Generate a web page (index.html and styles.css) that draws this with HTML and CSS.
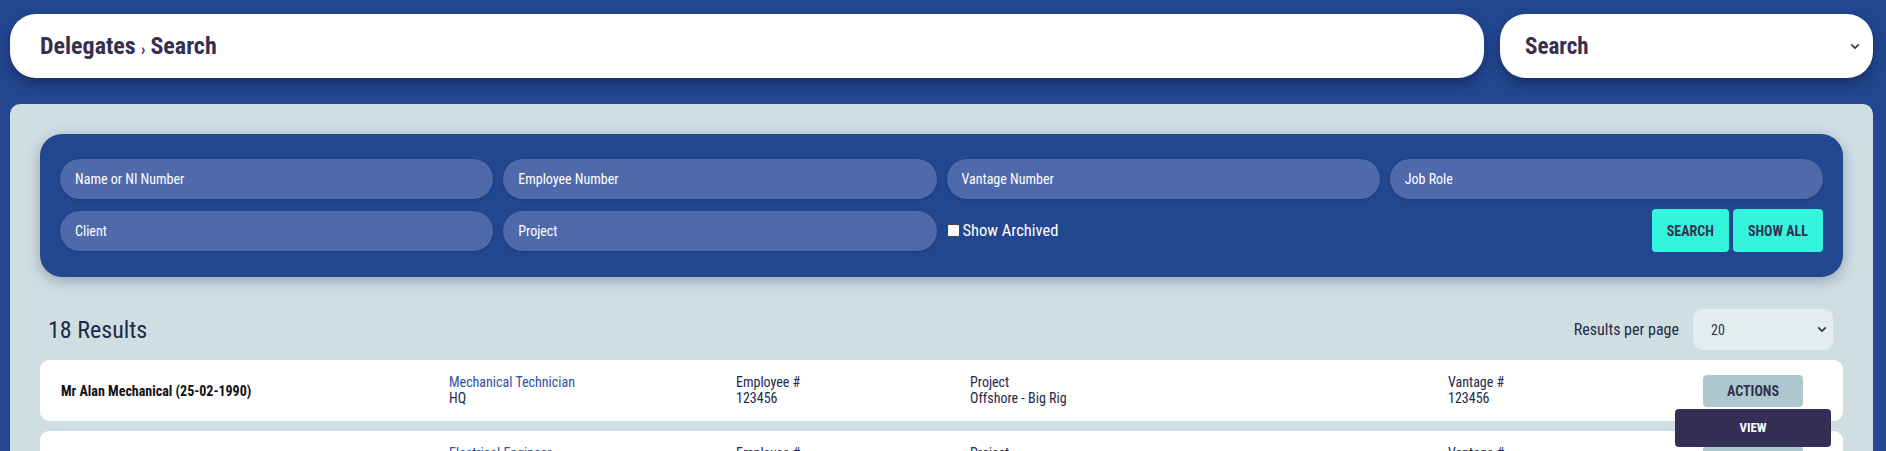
FILE: index.html
```html
<!DOCTYPE html>
<html lang="en">
<head>
<meta charset="utf-8">
<title>Delegates › Search</title>
<link rel="stylesheet" href="styles.css">
</head>
<body>
  <header class="topbar">
    <div class="crumb"><span class="crumb-main">Delegates</span><span class="crumb-sep">›</span><span class="crumb-main">Search</span></div>
    <div class="mode">
      <span class="mode-label">Search</span>
      <svg class="chev" viewBox="0 0 12 8" width="10" height="7"><path d="M1.5 1.5 L6 6 L10.5 1.5" fill="none" stroke="#35304f" stroke-width="2"/></svg>
    </div>
  </header>

  <main class="panel">
    <section class="filters">
      <div class="field">Name or NI Number</div>
      <div class="field">Employee Number</div>
      <div class="field">Vantage Number</div>
      <div class="field">Job Role</div>
      <div class="field">Client</div>
      <div class="field">Project</div>
      <label class="archived"><span class="box"></span>Show Archived</label>
      <div class="btns">
        <button class="btn">SEARCH</button>
        <button class="btn">SHOW ALL</button>
      </div>
    </section>

    <div class="results-bar">
      <h2 class="count">18 Results</h2>
      <div class="per-page">
        <span class="per-label">Results per page</span>
        <div class="per-select">
          <span>20</span>
          <svg class="chev" viewBox="0 0 12 8" width="10" height="7"><path d="M1.5 1.5 L6 6 L10.5 1.5" fill="none" stroke="#35304f" stroke-width="2"/></svg>
        </div>
      </div>
    </div>

    <div class="row">
      <div class="name">Mr Alan Mechanical (25-02-1990)</div>
      <div class="cell"><span class="role">Mechanical Technician</span><span>HQ</span></div>
      <div class="cell"><span>Employee #</span><span>123456</span></div>
      <div class="cell"><span>Project</span><span>Offshore - Big Rig</span></div>
      <div class="cell"><span>Vantage #</span><span>123456</span></div>
      <div class="act">
        <button class="actions">ACTIONS</button>
        <div class="menu"><span>VIEW</span></div>
      </div>
    </div>

    <div class="row">
      <div class="name">Mr Eric Electrical (14-07-1985)</div>
      <div class="cell"><span class="role">Electrical Engineer</span><span>HQ</span></div>
      <div class="cell"><span>Employee #</span><span>123457</span></div>
      <div class="cell"><span>Project</span><span>Offshore - Big Rig</span></div>
      <div class="cell"><span>Vantage #</span><span>123457</span></div>
      <div class="act">
        <button class="actions">ACTIONS</button>
      </div>
    </div>
  </main>
</body>
</html>
```
FILE: styles.css
```css
:root {
  --font: "Roboto Condensed", "Liberation Sans Narrow", "Arial Narrow", "Roboto", sans-serif;
  --navy: #35304f;
  --blue: #22468f;
}
* { box-sizing: border-box; }
html, body { margin: 0; }
body {
  background: var(--blue);
  font-family: var(--font);
  color: var(--navy);
  padding: 14px 13px 0 10px;
  height: 451px;
  overflow: hidden;
}

.topbar {
  display: flex;
  gap: 16px;
}
.crumb, .mode {
  height: 64px;
  background: #fff;
  border-radius: 26px;
  box-shadow: 0 6px 12px rgba(10, 25, 60, 0.45);
  display: flex;
  align-items: center;
}
.crumb {
  flex: 1;
  padding-left: 30px;
}
.crumb-main {
  font-size: 24px;
  font-weight: 700;
  color: var(--navy);
}
.crumb-sep {
  font-size: 17px;
  font-weight: 700;
  color: #2b3a8c;
  margin: 5px 5px 0 5px;
}
.mode {
  width: 373px;
  padding: 0 13px 0 25px;
  justify-content: space-between;
}
.mode-label {
  font-size: 23px;
  font-weight: 700;
}

.panel {
  margin-top: 26px;
  background: #cfdee3;
  border-radius: 10px;
  padding: 30px 30px;
  min-height: 400px;
}

.filters {
  background: var(--blue);
  border-radius: 22px;
  padding: 25px 20px;
  display: grid;
  grid-template-columns: repeat(4, 1fr);
  column-gap: 10px;
  row-gap: 10px;
  align-items: center;
  box-shadow: 0 4px 14px rgba(40, 60, 90, 0.35);
}
.field {
  height: 40px;
  border-radius: 20px;
  background: #4f6aab;
  color: #fff;
  font-size: 14px;
  display: flex;
  align-items: center;
  padding-left: 15px;
  box-shadow: 0 1px 3px rgba(0, 0, 0, 0.2);
}
.archived {
  color: #fff;
  font-size: 16.5px;
  display: flex;
  align-items: center;
  gap: 3px;
}
.box {
  width: 13px;
  height: 13px;
  background: #fff;
  border-radius: 2px;
  border: 1px solid #444;
}
.btns {
  display: flex;
  justify-content: flex-end;
  gap: 4px;
}
.btn {
  height: 43px;
  border: none;
  border-radius: 4px;
  background: #33f5de;
  color: var(--navy);
  font-family: var(--font);
  font-weight: 700;
  font-size: 14px;
  padding: 0 15px;
}

.results-bar {
  margin-top: 32px;
  display: flex;
  justify-content: space-between;
  align-items: center;
  padding-left: 8px;
  padding-right: 10px;
}
.count {
  margin: 0;
  font-size: 24px;
  font-weight: 400;
  color: #1f2a48;
}
.per-page {
  display: flex;
  align-items: center;
  gap: 14px;
}
.per-label {
  font-size: 16px;
  color: #1f2a48;
}
.per-select {
  width: 140px;
  height: 41px;
  border-radius: 9px;
  background: #e3edf0;
  display: flex;
  align-items: center;
  justify-content: space-between;
  padding: 0 6px 0 18px;
  font-size: 14px;
  color: var(--navy);
}

.row {
  margin-top: 10px;
  height: 61px;
  background: #fff;
  border-radius: 9px;
  display: grid;
  grid-template-columns: 388px 287px 234px 478px 255px 100px;
  align-items: center;
  padding-left: 21px;
}
.name {
  font-weight: 700;
  font-size: 14px;
  color: #111;
}
.cell {
  display: flex;
  flex-direction: column;
  font-size: 14px;
  line-height: 16px;
  color: #23294a;
  margin-top: -1px;
}
.role { color: #2e4fa3; }
.act {
  position: relative;
}
.actions {
  width: 100px;
  height: 32px;
  border: none;
  border-radius: 4px;
  background: #adc9cf;
  color: var(--navy);
  font-family: var(--font);
  font-weight: 700;
  font-size: 14px;
  display: block;
}
.menu {
  position: absolute;
  top: 34px;
  left: -28px;
  width: 156px;
  height: 38px;
  background: #362f55;
  border-radius: 4px;
  color: #fff;
  font-weight: 700;
  font-size: 13px;
  display: flex;
  align-items: center;
  justify-content: center;
  z-index: 5;
}
```
